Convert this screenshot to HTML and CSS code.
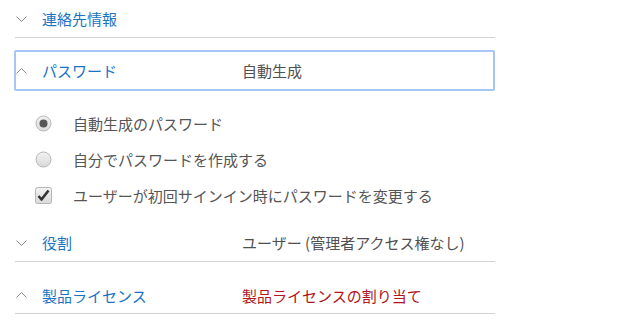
FILE: index.html
```html
<!DOCTYPE html>
<html lang="ja">
<head>
  <meta charset="UTF-8">
  <meta name="viewport" content="width=device-width, initial-scale=1.0">
  <title>ユーザーの追加</title>
  <link rel="stylesheet" href="styles.css">
</head>
<body>
  <div class="panel">
    <!-- 連絡先情報 -->
    <div class="row first">
      <svg class="chev" width="11" height="6" viewBox="0 0 11 6"><path d="M0.5 0.5 L5.5 5.5 L10.5 0.5" fill="none" stroke="#8a8a8a" stroke-width="1"/></svg>
      <span class="label">連絡先情報</span>
    </div>

    <!-- パスワード (展開中) -->
    <div class="row open">
      <svg class="chev" width="11" height="6" viewBox="0 0 11 6"><path d="M0.5 5.5 L5.5 0.5 L10.5 5.5" fill="none" stroke="#8a8a8a" stroke-width="1"/></svg>
      <span class="label">パスワード</span>
      <span class="value">自動生成</span>
    </div>

    <div class="options">
      <div class="option">
        <svg class="mark" width="17" height="17" viewBox="0 0 17 17">
          <defs>
            <linearGradient id="rg" x1="0" y1="0" x2="0" y2="1">
              <stop offset="0" stop-color="#f2f2f2"/>
              <stop offset="1" stop-color="#d9d9d9"/>
            </linearGradient>
          </defs>
          <circle cx="8.5" cy="8.5" r="7.5" fill="url(#rg)" stroke="#b5b5b5"/>
          <circle cx="8.5" cy="8.5" r="4" fill="#555"/>
        </svg>
        <span>自動生成のパスワード</span>
      </div>
      <div class="option">
        <svg class="mark" width="17" height="17" viewBox="0 0 17 17">
          <circle cx="8.5" cy="8.5" r="7.5" fill="url(#rg)" stroke="#b5b5b5"/>
        </svg>
        <span>自分でパスワードを作成する</span>
      </div>
      <div class="option">
        <svg class="mark" width="17" height="17" viewBox="0 0 17 17">
          <rect x="0.5" y="0.5" width="16" height="16" rx="2" fill="url(#rg)" stroke="#b5b5b5"/>
          <path d="M3.5 9 L6.5 12.5 L13.5 3.5" fill="none" stroke="#333" stroke-width="2.6" stroke-linejoin="round"/>
        </svg>
        <span>ユーザーが初回サインイン時にパスワードを変更する</span>
      </div>
    </div>

    <!-- 役割 -->
    <div class="row role">
      <svg class="chev" width="11" height="6" viewBox="0 0 11 6"><path d="M0.5 0.5 L5.5 5.5 L10.5 0.5" fill="none" stroke="#8a8a8a" stroke-width="1"/></svg>
      <span class="label">役割</span>
      <span class="value">ユーザー (管理者アクセス権なし)</span>
    </div>

    <!-- 製品ライセンス -->
    <div class="row license">
      <svg class="chev" width="11" height="6" viewBox="0 0 11 6"><path d="M0.5 5.5 L5.5 0.5 L10.5 5.5" fill="none" stroke="#8a8a8a" stroke-width="1"/></svg>
      <span class="label">製品ライセンス</span>
      <span class="value error">製品ライセンスの割り当て</span>
    </div>
  </div>
</body>
</html>
```

FILE: styles.css
```css
body {
  margin: 0;
  background-color: #fff;
  font-family: "Noto Sans CJK JP", "Noto Sans", sans-serif;
  font-size: 15px;
  color: #555;
}

.panel {
  width: 480px;
  margin-left: 15px;
}

.row {
  display: flex;
  align-items: center;
  height: 37px;
  padding-left: 1px;
  border-bottom: 1px solid #d2d2d2;
  box-sizing: border-box;
}

.row.first {
  height: 38px;
}

.chev {
  flex: none;
  margin-right: 15px;
}

.label {
  width: 200px;
  color: #1b73c4;
}

.value {
  color: #505050;
}

.value.error {
  color: #b2151b;
}

/* 展開中の行 (フォーカス枠) */
.row.open {
  height: 41px;
  margin-top: 12px;
  margin-left: -1px;
  padding-left: 0;
  border: 2px solid #a6c6f6;
  border-radius: 2px;
}

.options {
  padding: 14px 0 11px 20px;
}

.option {
  display: flex;
  align-items: center;
  height: 36px;
}

.mark {
  flex: none;
  margin-right: 21px;
}

.row.role {
  height: 38px;
}

.row.license {
  height: 37px;
  margin-top: 15px;
}
```
